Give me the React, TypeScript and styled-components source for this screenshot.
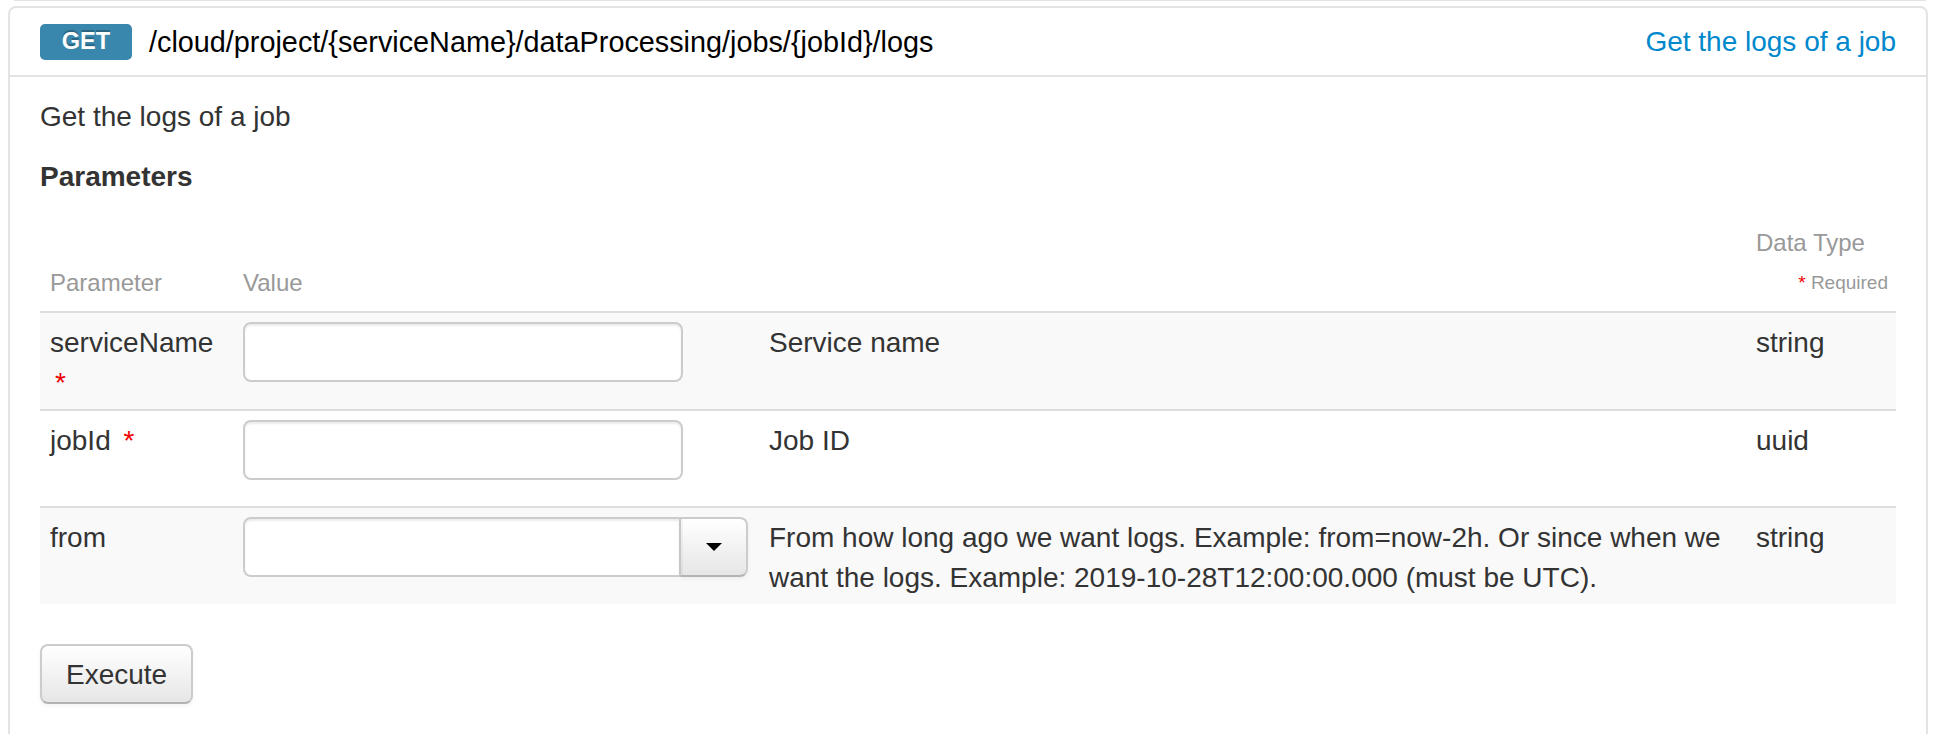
import styled, { createGlobalStyle } from "styled-components";

// ------ page-wide defaults ------
const GlobalStyle = createGlobalStyle`
  body {
    margin: 0;
    background: #fff;
    color: #333;
    font-family: "Liberation Sans", Helvetica, Arial, sans-serif;
    font-size: 28px;
    line-height: 40px;
  }
  * {
    box-sizing: border-box;
  }
`;

type Param = {
  name: string;
  required: boolean;
  description: string;
  type: string;
  kind: "text" | "combo";
};

const params: Param[] = [
  {
    name: "serviceName",
    required: true,
    description: "Service name",
    type: "string",
    kind: "text",
  },
  {
    name: "jobId",
    required: true,
    description: "Job ID",
    type: "uuid",
    kind: "text",
  },
  {
    name: "from",
    required: false,
    description:
      "From how long ago we want logs. Example: from=now-2h. Or since when we want the logs. Example: 2019-10-28T12:00:00.000 (must be UTC).",
    type: "string",
    kind: "combo",
  },
];

function App() {
  return (
    <>
      <GlobalStyle />
      <PrevPanelEdge />
      <Panel>
        {/* ------ operation heading ------ */}
        <Heading>
          <MethodBadge>GET</MethodBadge>
          <PathText>
            /cloud/project/{"{serviceName}"}/dataProcessing/jobs/{"{jobId}"}/logs
          </PathText>
          <SummaryLink href="#">Get the logs of a job</SummaryLink>
        </Heading>

        {/* ------ operation content ------ */}
        <Content>
          <Description>Get the logs of a job</Description>
          <SectionTitle>Parameters</SectionTitle>

          <ParamTable>
            <colgroup>
              <col style={{ width: 193 }} />
              <col style={{ width: 526 }} />
              <col style={{ width: 987 }} />
              <col style={{ width: 150 }} />
            </colgroup>
            <thead>
              <tr>
                <HeadCell>Parameter</HeadCell>
                <HeadCell>Value</HeadCell>
                <HeadCell />
                <HeadCell>
                  Data Type
                  <RequiredNote>
                    <Star $small>*</Star> Required
                  </RequiredNote>
                </HeadCell>
              </tr>
            </thead>
            <tbody>
              {params.map((p, i) => (
                <ParamRow key={p.name} $striped={i % 2 === 0}>
                  <Cell>
                    {p.name}
                    {p.required ? (
                      <>
                        {" "}
                        <Star>*</Star>
                      </>
                    ) : null}
                  </Cell>
                  <Cell>
                    {p.kind === "text" ? (
                      <TextInput type="text" />
                    ) : (
                      <Combo>
                        <ComboInput type="text" />
                        <ComboToggle type="button">
                          <Caret />
                        </ComboToggle>
                      </Combo>
                    )}
                  </Cell>
                  <Cell>{p.description}</Cell>
                  <Cell>{p.type}</Cell>
                </ParamRow>
              ))}
            </tbody>
          </ParamTable>

          <ExecuteButton type="button">Execute</ExecuteButton>
        </Content>
      </Panel>
    </>
  );
}

export default App;

// ------ component styles -------
const PrevPanelEdge = styled.div`
  height: 1px;
  margin: 0 14px 5px 14px;
  background: #e3e3e3;
`;

const Panel = styled.section`
  margin: 0 12px 0 8px;
  border: 2px solid #e3e3e3;
  border-radius: 8px;
  background: #fff;
`;

const Heading = styled.header`
  display: flex;
  align-items: center;
  height: 69px;
  padding: 0 30px;
  border-bottom: 2px solid #e3e3e3;
`;

const MethodBadge = styled.span`
  display: flex;
  align-items: center;
  justify-content: center;
  width: 92px;
  height: 36px;
  border-radius: 5px;
  background: #3a87ad;
  color: #fff;
  font-size: 23.5px;
  font-weight: bold;
  line-height: 1;
  text-shadow: 0 -2px 0 rgba(0, 0, 0, 0.25);
`;

const PathText = styled.span`
  margin-left: 17px;
  color: #000;
  font-size: 28.8px;
`;

const SummaryLink = styled.a`
  margin-left: auto;
  color: #0088cc;
  text-decoration: none;
`;

const Content = styled.div`
  padding: 20px 30px 80px;
`;

const Description = styled.p`
  margin: 0 0 20px;
`;

const SectionTitle = styled.h4`
  margin: 0 0 18px;
  font-size: 28px;
  line-height: 40px;
  font-weight: bold;
`;

const ParamTable = styled.table`
  width: 100%;
  table-layout: fixed;
  border-collapse: collapse;
  border-spacing: 0;
`;

const HeadCell = styled.th`
  padding: 8px 10px;
  color: #999;
  font-size: 24px;
  font-weight: normal;
  line-height: 40px;
  text-align: left;
  vertical-align: bottom;

  &:last-child {
    padding-right: 8px;
  }
`;

const RequiredNote = styled.div`
  text-align: right;
  font-size: 19px;
`;

const ParamRow = styled.tr<{ $striped: boolean }>`
  background: ${(p) => (p.$striped ? "#f9f9f9" : "transparent")};
`;

const Cell = styled.td`
  padding: 10px 10px 6px;
  border-top: 2px solid #dddddd;
  vertical-align: top;
  line-height: 40px;
`;

const Star = styled.span<{ $small?: boolean }>`
  margin-left: ${(p) => (p.$small ? "0" : "5px")};
  color: #e00;
  font-size: ${(p) => (p.$small ? "19px" : "28px")};
`;

const TextInput = styled.input`
  display: block;
  width: 440px;
  height: 60px;
  margin: -1px 0 20px;
  padding: 8px 12px;
  border: 2px solid #ccc;
  border-radius: 8px;
  background: #fff;
  box-shadow: inset 0 2px 2px rgba(0, 0, 0, 0.075);
  font: inherit;
`;

const Combo = styled.div`
  display: flex;
  width: 505px;
  height: 60px;
  margin: -1px 0 20px;
`;

const ComboInput = styled(TextInput)`
  flex: 1;
  width: auto;
  margin: 0;
  border-radius: 8px 0 0 8px;
`;

const ComboToggle = styled.button`
  display: flex;
  align-items: center;
  justify-content: center;
  width: 67px;
  height: 60px;
  padding: 0;
  border: 2px solid #ccc;
  border-left-width: 0;
  border-bottom-color: #b3b3b3;
  border-radius: 0 8px 8px 0;
  background: linear-gradient(#ffffff, #e6e6e6);
  box-shadow: inset 2px 0 0 rgba(0, 0, 0, 0.04), 0 2px 4px rgba(0, 0, 0, 0.05);
`;

const Caret = styled.span`
  width: 0;
  height: 0;
  border-top: 8px solid #000;
  border-left: 8px solid transparent;
  border-right: 8px solid transparent;
`;

const ExecuteButton = styled.button`
  display: block;
  margin-top: 40px;
  padding: 9px 24px 7px;
  border: 2px solid #ccc;
  border-bottom-color: #b3b3b3;
  border-radius: 8px;
  background: linear-gradient(#ffffff, #e6e6e6);
  box-shadow: inset 0 2px 0 rgba(255, 255, 255, 0.2), 0 2px 4px rgba(0, 0, 0, 0.05);
  color: #333;
  font-family: inherit;
  font-size: 28px;
  line-height: 40px;
`;
